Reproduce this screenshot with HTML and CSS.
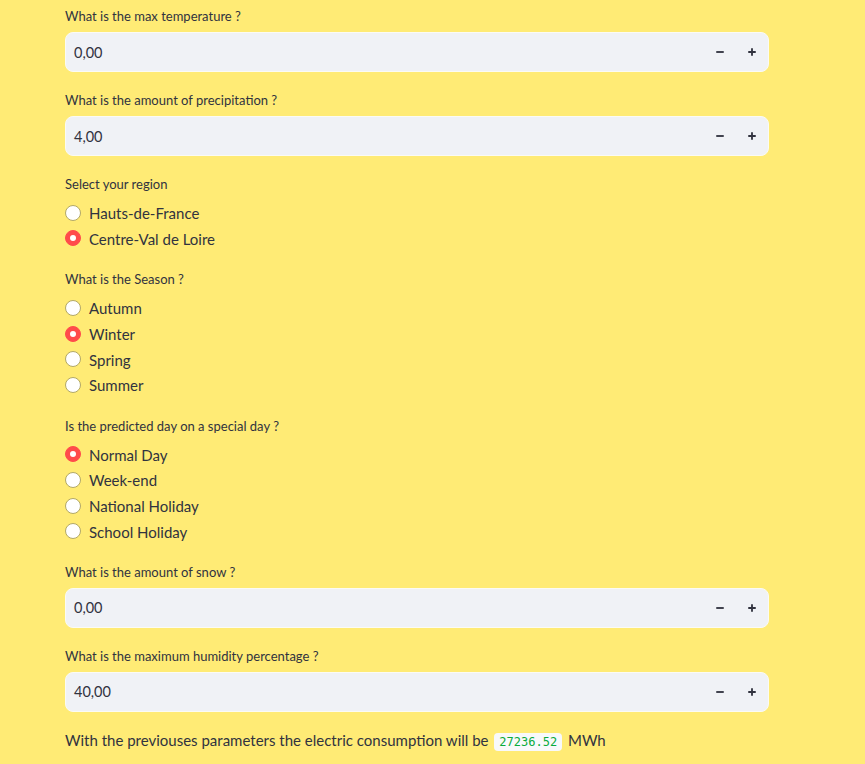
FILE: index.html
```html
<!DOCTYPE html>
<html lang="en">
<head>
<meta charset="utf-8">
<title>Electric consumption</title>
<link rel="stylesheet" href="styles.css">
</head>
<body>
<main class="main">
  <div class="field">
    <label class="label">What is the max temperature ?</label>
    <div class="num">
      <span class="num-value">0,00</span>
      <span class="step"><svg viewBox="0 0 12 12" width="12" height="12"><path d="M1.5 6h9" /></svg></span>
      <span class="step"><svg viewBox="0 0 12 12" width="12" height="12"><path d="M1.5 6h9M6 1.5v9" /></svg></span>
    </div>
  </div>

  <div class="field">
    <label class="label">What is the amount of precipitation ?</label>
    <div class="num">
      <span class="num-value">4,00</span>
      <span class="step"><svg viewBox="0 0 12 12" width="12" height="12"><path d="M1.5 6h9" /></svg></span>
      <span class="step"><svg viewBox="0 0 12 12" width="12" height="12"><path d="M1.5 6h9M6 1.5v9" /></svg></span>
    </div>
  </div>

  <div class="field">
    <label class="label">Select your region</label>
    <div class="radios">
      <div class="radio"><span class="dot"></span><span class="rtext">Hauts-de-France</span></div>
      <div class="radio"><span class="dot on"></span><span class="rtext">Centre-Val de Loire</span></div>
    </div>
  </div>

  <div class="field">
    <label class="label">What is the Season ?</label>
    <div class="radios">
      <div class="radio"><span class="dot"></span><span class="rtext">Autumn</span></div>
      <div class="radio"><span class="dot on"></span><span class="rtext">Winter</span></div>
      <div class="radio"><span class="dot"></span><span class="rtext">Spring</span></div>
      <div class="radio"><span class="dot"></span><span class="rtext">Summer</span></div>
    </div>
  </div>

  <div class="field">
    <label class="label">Is the predicted day on a special day ?</label>
    <div class="radios">
      <div class="radio"><span class="dot on"></span><span class="rtext">Normal Day</span></div>
      <div class="radio"><span class="dot"></span><span class="rtext">Week-end</span></div>
      <div class="radio"><span class="dot"></span><span class="rtext">National Holiday</span></div>
      <div class="radio"><span class="dot"></span><span class="rtext">School Holiday</span></div>
    </div>
  </div>

  <div class="field">
    <label class="label">What is the amount of snow ?</label>
    <div class="num">
      <span class="num-value">0,00</span>
      <span class="step"><svg viewBox="0 0 12 12" width="12" height="12"><path d="M1.5 6h9" /></svg></span>
      <span class="step"><svg viewBox="0 0 12 12" width="12" height="12"><path d="M1.5 6h9M6 1.5v9" /></svg></span>
    </div>
  </div>

  <div class="field">
    <label class="label">What is the maximum humidity percentage ?</label>
    <div class="num">
      <span class="num-value">40,00</span>
      <span class="step"><svg viewBox="0 0 12 12" width="12" height="12"><path d="M1.5 6h9" /></svg></span>
      <span class="step"><svg viewBox="0 0 12 12" width="12" height="12"><path d="M1.5 6h9M6 1.5v9" /></svg></span>
    </div>
  </div>

  <p class="result">With the previouses parameters the electric consumption will be <code class="code">27236.52</code> MWh</p>
</main>
</body>
</html>
```

FILE: styles.css
```css
html, body {
  margin: 0;
  padding: 0;
  background: #ffeb75;
}

body {
  font-family: Lato, "Noto Sans", sans-serif;
  color: #31333f;
}

.main {
  width: 704px;
  margin-left: 65px;
  padding-top: 4px;
  display: flex;
  flex-direction: column;
  gap: 16px;
}

.field {
  display: flex;
  flex-direction: column;
}

.label {
  box-sizing: border-box;
  display: flex;
  align-items: center;
  height: 24px;
  padding-top: 2px;
  margin-bottom: 4px;
  font-size: 13px;
  line-height: 1.2;
}

.num {
  box-sizing: border-box;
  height: 40px;
  display: flex;
  align-items: center;
  background: #f0f2f6;
  border: 1px solid #fbfbf4;
  border-radius: 8px;
}

.num-value {
  flex: 1;
  padding-left: 8px;
  font-size: 14.5px;
}

.step {
  width: 32px;
  height: 38px;
  display: flex;
  align-items: center;
  justify-content: center;
}

.step svg {
  stroke: #31333f;
  stroke-width: 2.2;
  fill: none;
  width: 10px;
  height: 10px;
}

.radios {
  display: flex;
  flex-direction: column;
}

.radio {
  height: 25.6px;
  display: flex;
  align-items: center;
  gap: 8px;
  font-size: 15px;
}

.rtext {
  padding-top: 1px;
}

.dot {
  box-sizing: border-box;
  width: 16px;
  height: 16px;
  border-radius: 50%;
  background: #ffffff;
  border: 1px solid #b2a866;
  display: flex;
  align-items: center;
  justify-content: center;
}

.dot.on {
  background: #ff4b4b;
  border-color: #ff4b4b;
}

.dot.on::after {
  content: "";
  width: 6px;
  height: 6px;
  border-radius: 50%;
  background: #ffffff;
}

.result {
  margin: 0;
  font-size: 15px;
  line-height: 25.6px;
}

.code {
  font-family: "DejaVu Sans Mono", "Liberation Mono", monospace;
  font-size: 12px;
  color: #09ab3b;
  background: #f8f9fb;
  border-radius: 4px;
  padding: 2px 5px;
  margin: 0 2px;
}
```
